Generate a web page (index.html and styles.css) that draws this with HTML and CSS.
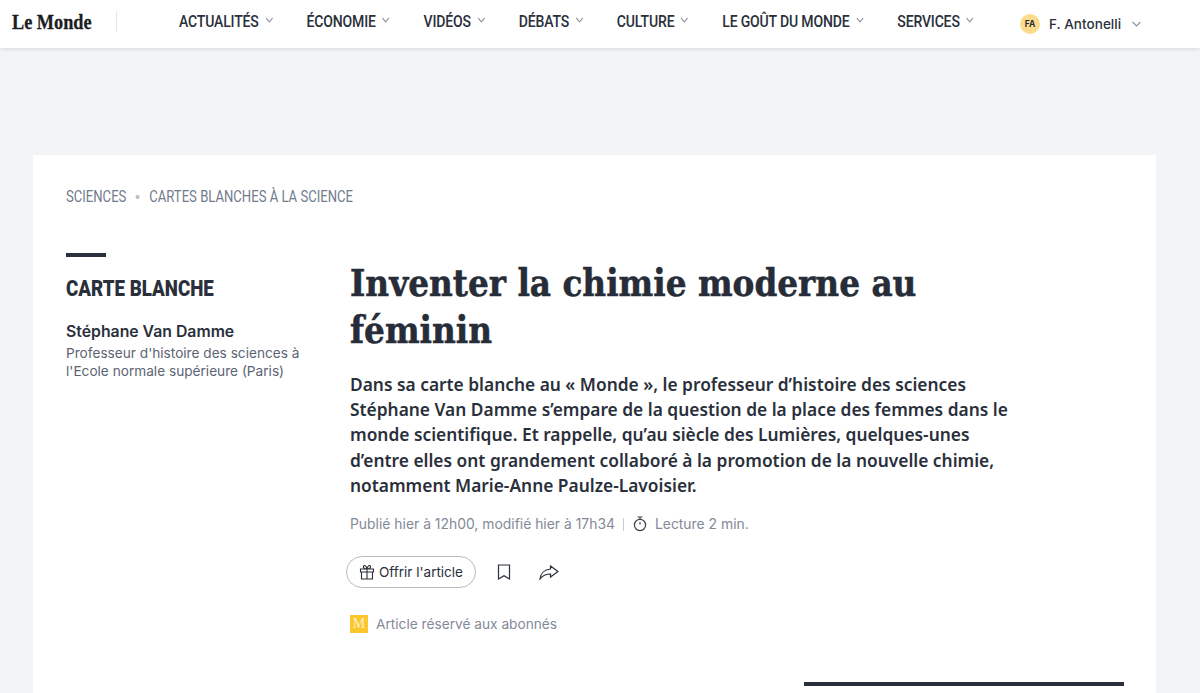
FILE: index.html
```html
<!DOCTYPE html>
<html lang="fr">
<head>
<meta charset="utf-8">
<title>Inventer la chimie moderne au féminin</title>
<link rel="stylesheet" href="styles.css">
</head>
<body>
<header class="topbar">
  <div class="logo-box"><a class="logo">Le Monde</a></div>
  <span class="logo-sep"></span>
  <div class="nav-box">
    <nav class="nav">
      <a class="nav-item">ACTUALITÉS<svg class="chev" viewBox="0 0 8 5"><path d="M.5.7 4 4.2 7.500.7"/></svg></a>
      <a class="nav-item">ÉCONOMIE<svg class="chev" viewBox="0 0 8 5"><path d="M.5.7 4 4.2 7.500.7"/></svg></a>
      <a class="nav-item">VIDÉOS<svg class="chev" viewBox="0 0 8 5"><path d="M.5.7 4 4.2 7.500.7"/></svg></a>
      <a class="nav-item">DÉBATS<svg class="chev" viewBox="0 0 8 5"><path d="M.5.7 4 4.2 7.500.7"/></svg></a>
      <a class="nav-item">CULTURE<svg class="chev" viewBox="0 0 8 5"><path d="M.5.7 4 4.2 7.500.7"/></svg></a>
      <a class="nav-item">LE GOÛT DU MONDE<svg class="chev" viewBox="0 0 8 5"><path d="M.5.7 4 4.2 7.500.7"/></svg></a>
      <a class="nav-item">SERVICES<svg class="chev" viewBox="0 0 8 5"><path d="M.5.7 4 4.2 7.500.7"/></svg></a>
    </nav>
  </div>
  <div class="account">
    <span class="avatar">FA</span>
    <span class="account-name">F. Antonelli</span>
    <svg class="chev" viewBox="0 0 8 5"><path d="M.5.7 4 4.2 7.500.7"/></svg>
  </div>
</header>
<main class="card">
  <div class="crumbs"><a>SCIENCES</a><span class="dot"></span><a>CARTES BLANCHES À LA SCIENCE</a></div>
  <div class="columns">
    <aside class="side">
      <div class="side-rule"></div>
      <div class="side-title">CARTE BLANCHE</div>
      <div class="author">Stéphane Van Damme</div>
      <p class="bio">Professeur d'histoire des sciences à l'Ecole normale supérieure (Paris)</p>
    </aside>
    <article class="article">
      <h1 class="headline">Inventer la chimie moderne au féminin</h1>
      <p class="lead">Dans sa carte blanche au «&nbsp;Monde&nbsp;», le professeur d’histoire des sciences Stéphane Van Damme s’empare de la question de la place des femmes dans le monde scientifique. Et rappelle, qu’au siècle des Lumières, quelques-unes d’entre elles ont grandement collaboré à la promotion de la nouvelle chimie, notamment Marie-Anne Paulze-Lavoisier.</p>
      <div class="meta">
        <span>Publié hier à 12h00, modifié hier à 17h34</span>
        <span class="meta-sep"></span>
        <svg class="timer" viewBox="0 0 14 16"><path d="M4.500 1h5M7 1v2.500M7 8.500V6"/><circle cx="7" cy="9" r="5.600"/></svg>
        <span>Lecture 2 min.</span>
      </div>
      <div class="actions">
        <button class="gift">
          <svg class="gift-icon" viewBox="0 0 16 16"><path d="M1.500 5h13v3h-13zM2.500 8v7h11V8M8 5v10M8 5C6 5 4 4 4.500 2.300 5 .7 7.500 1.500 8 5ZM8 5c2 0 4-1 3.500-2.700C11 .7 8.500 1.500 8 5Z"/></svg>
          <span>Offrir l'article</span>
        </button>
        <svg class="bookmark" viewBox="0 0 14 16"><path d="M1.500 1h11v14L7 11.800 1.500 15Z"/></svg>
        <svg class="share" viewBox="0 0 20 15"><path d="M11.500 1 19 6.500 11.500 12V9C7 9 3.500 10.500 1 14 1.500 8.500 5.500 4.500 11.500 4Z"/></svg>
      </div>
      <div class="reserved">
        <span class="badge">M</span>
        <span>Article réservé aux abonnés</span>
      </div>
    </article>
  </div>
  <div class="ad-rule"></div>
</main>
</body>
</html>
```
FILE: styles.css
```css
* { box-sizing: border-box; }
body {
  margin: 0;
  height: 693px;
  overflow: hidden;
  background: #f3f4f6;
  color: #2a303b;
  font-family: "Inter", "Liberation Sans", sans-serif;
}
.topbar {
  height: 48px;
  background: #fff;
  box-shadow: 0 1px 4px rgba(30, 35, 45, .12);
  display: flex;
  align-items: flex-start;
  padding-left: 12px;
}
.logo-box { width: 80px; flex: none; }
.logo {
  display: block;
  font-family: "Liberation Serif", serif;
  font-weight: 700;
  font-size: 22px;
  line-height: 43px;
  color: #1a1d22;
  white-space: nowrap;
  transform: scaleX(.83);
  transform-origin: left center;
  -webkit-text-stroke: .3px #1a1d22;
}
.logo-sep {
  flex: none;
  width: 1px;
  height: 21px;
  margin: 11px 0 0 24px;
  background: #e4e6ea;
}
.nav-box {
  flex: none;
  width: 800px;
  margin-left: 62px;
}
.nav {
  display: flex;
  gap: 41px;
  width: 970px;
  transform: scaleX(.825);
  transform-origin: left center;
}
.nav-item {
  font-family: "Roboto", sans-serif;
  font-size: 17px;
  font-weight: 500;
  line-height: 43px;
  letter-spacing: -.2px;
  color: #2a303b;
  white-space: nowrap;
  display: flex;
  align-items: center;
  gap: 8px;
}
.chev {
  flex: none;
  width: 9px;
  height: 6px;
  margin-top: -3px;
  fill: none;
  stroke: #8f95a0;
  stroke-width: 1.100;
}
.account {
  display: flex;
  align-items: center;
  height: 48px;
  margin-left: 41px;
  font-size: 13.500px;
  font-weight: 500;
  white-space: nowrap;
}
.avatar {
  width: 20px;
  height: 20px;
  border-radius: 50%;
  background: #fbdc8c;
  font-size: 8.500px;
  font-weight: 700;
  display: flex;
  align-items: center;
  justify-content: center;
  margin-right: 9px;
}
.account-name { margin-right: 11px; letter-spacing: .05px; }
.account .chev { margin-top: 0; }
.card {
  margin: 107px 44px 0 33px;
  height: 538px;
  overflow: hidden;
  background: #fff;
  padding: 31px 32px 0 33px;
}
.crumbs {
  font-family: "Roboto", sans-serif;
  font-size: 16px;
  line-height: 22px;
  color: #727b8b;
  display: flex;
  align-items: center;
  white-space: nowrap;
  transform: scaleX(.818);
  transform-origin: left center;
}
.dot {
  width: 5px;
  height: 4px;
  border-radius: 50%;
  background: #b8bdc6;
  margin: 0 12px 0 11px;
}
.columns {
  display: flex;
  margin-top: 45px;
}
.side {
  width: 284px;
  flex: none;
}
.side-rule {
  width: 40px;
  height: 4px;
  background: #2a303b;
}
.side-title {
  font-family: "Roboto", sans-serif;
  font-size: 22px;
  font-weight: 900;
  line-height: 28px;
  margin-top: 18px;
  white-space: nowrap;
  transform: scaleX(.85);
  transform-origin: left center;
}
.author {
  font-size: 15.800px;
  font-weight: 600;
  line-height: 20px;
  margin-top: 19px;
}
.bio {
  margin: 2px 0 0;
  width: 240px;
  font-size: 13.650px;
  line-height: 18px;
  color: #5c6473;
}
.article { padding-top: 7px; width: 670px; }
.headline {
  margin: 0;
  font-family: "DejaVu Serif Condensed", "DejaVu Serif", serif;
  font-weight: 700;
  font-size: 36.400px;
  line-height: 47px;
  color: #272d38;
  width: 640px;
  -webkit-text-stroke: .5px #272d38;
}
.lead {
  margin: 18px 0 0;
  font-family: "Noto Sans", sans-serif;
  font-size: 17.350px;
  font-weight: 600;
  line-height: 25.200px;
  color: #2a303b;
}
.meta {
  display: flex;
  align-items: center;
  margin-top: 16px;
  height: 20px;
  font-size: 13.900px;
  color: #838a97;
}
.meta-sep {
  width: 1px;
  height: 13px;
  background: #c9cdd3;
  margin: 0 9px 0 8px;
}
.timer {
  width: 14px;
  height: 16px;
  fill: none;
  stroke: #3b414c;
  stroke-width: 1.200;
  margin-right: 8px;
}
.actions {
  display: flex;
  align-items: center;
  margin: 22px 0 0 -4px;
  height: 32px;
}
.gift {
  width: 130px;
  height: 32px;
  border: 1px solid #b9bcc2;
  border-radius: 16px;
  background: #fff;
  display: flex;
  align-items: center;
  gap: 4px;
  padding: 0 0 0 12px;
  font: 400 13.500px "Inter", sans-serif;
  color: #2a303b;
}
.gift-icon {
  width: 16px;
  height: 16px;
  fill: none;
  stroke: #2a303b;
  stroke-width: 1.100;
}
.bookmark {
  width: 14px;
  height: 16px;
  margin-left: 21px;
  fill: none;
  stroke: #2a303b;
  stroke-width: 1.200;
}
.share {
  width: 20px;
  height: 15px;
  margin-left: 28px;
  fill: none;
  stroke: #2a303b;
  stroke-width: 1.200;
}
.reserved {
  display: flex;
  align-items: center;
  margin-top: 26px;
  height: 20px;
  font-size: 13.700px;
  color: #838a97;
}
.badge {
  width: 18px;
  height: 18px;
  background: #fcc62d;
  color: #fff3c4;
  font: 400 14px/18px "Liberation Serif", serif;
  text-align: center;
  margin-right: 8px;
}
.ad-rule {
  width: 320px;
  height: 4px;
  background: #2a303b;
  margin: 48px 0 0 auto;
}
```
